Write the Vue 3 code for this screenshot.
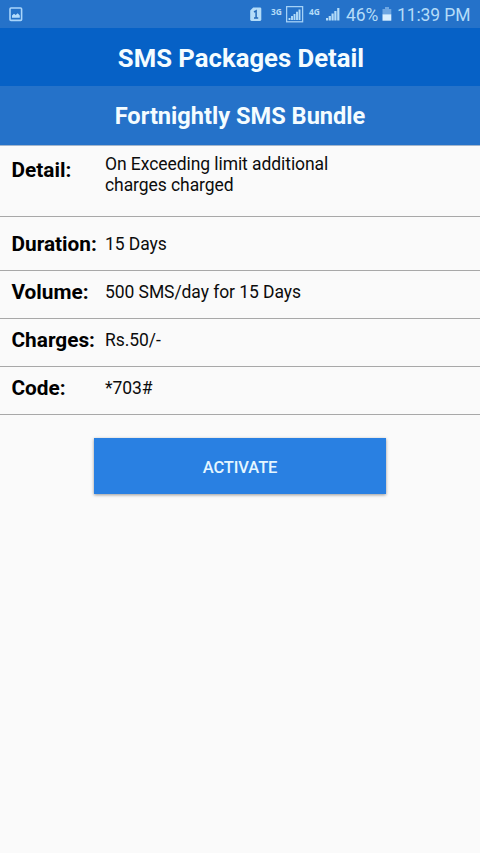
<script setup>
const rows = [
  { label: 'Detail:', value: 'On Exceeding limit additional charges charged', kind: 'tall' },
  { label: 'Duration:', value: '15 Days', kind: 'medium' },
  { label: 'Volume:', value: '500 SMS/day for 15 Days', kind: 'short' },
  { label: 'Charges:', value: 'Rs.50/-', kind: 'short' },
  { label: 'Code:', value: '*703#', kind: 'short' },
]
</script>

<template>
  <div class="screen">
    <div class="status">
      <svg class="photo" width="14" height="15" viewBox="0 0 14 15">
        <rect x="1" y="1" width="11.6" height="12.4" rx="1" fill="none" stroke="#a9d5fb" stroke-width="1.6" />
        <path d="M3 10.8V8.6L5 6.7L6.7 8L8.7 6.2L10.8 8.6V10.8Z" fill="#b4dcfc" />
      </svg>
      <svg class="sim" width="12" height="15" viewBox="0 0 12 15">
        <path d="M3.2 0.5H10Q11.3 0.5 11.3 1.8V12.6Q11.3 14 10 14H1.5Q0.2 14 0.2 12.6V3.5Z" fill="#b4dcf8" />
        <path d="M4 5L6.1 3.8V11.2M4 11.1H8.2" fill="none" stroke="#2369b9" stroke-width="1.5" />
      </svg>
      <span class="net net-a">3G</span>
      <svg class="boxed" width="18" height="17" viewBox="0 0 18 17">
        <rect x="0.6" y="0.6" width="16" height="15.2" fill="none" stroke="#a4d1f7" stroke-width="1.3" />
        <path d="M3.5 12V14M6 10V14M8.5 8V14M11 5.8V14M13.5 3.5V14" stroke="#b4dcf8" stroke-width="1.9" />
      </svg>
      <span class="net net-b">4G</span>
      <svg class="signal" width="14" height="14" viewBox="0 0 14 14">
        <path d="M1 11V13.5M3.8 9V13.5M6.6 6.5V13.5M9.4 4V13.5M12.3 1V13.5" stroke="#b4dcf8" stroke-width="2.2" />
      </svg>
      <span class="percent">46%</span>
      <svg class="battery" width="10" height="15" viewBox="0 0 10 15">
        <path d="M3 0H7V2H9.3V7.5H0.5V2H3Z" fill="#6da6e2" />
        <rect x="0.5" y="7.3" width="8.8" height="6.4" fill="#d9efff" />
      </svg>
      <span class="time">11:39 PM</span>
    </div>
    <header class="title">SMS Packages Detail</header>
    <h2 class="subtitle">Fortnightly SMS Bundle</h2>
    <dl class="rows">
      <div v-for="row in rows" :key="row.label" class="row" :class="row.kind">
        <dt>{{ row.label }}</dt>
        <dd>{{ row.value }}</dd>
      </div>
    </dl>
    <button class="activate">ACTIVATE</button>
  </div>
</template>

<style>
body {
  background: #fafafa;
}
</style>

<style scoped>
.screen {
  width: 480px;
  height: 853px;
  overflow: hidden;
  background: #fafafa;
  font-family: Roboto, sans-serif;
  color: #0c0c0c;
}
.status {
  box-sizing: border-box;
  height: 28px;
  padding: 7px 0 0 9px;
  background: #2572c9;
  color: #b4dcf8;
  display: flex;
  align-items: flex-start;
  white-space: nowrap;
}
.status svg,
.status span {
  flex: none;
}
.sim {
  margin-left: 227px;
}
.net {
  font: bold 8.4px/9px "Open Sans", sans-serif;
  width: 14px;
}
.net-a {
  margin-left: 9px;
}
.boxed {
  margin-left: 1px;
  margin-top: -1px;
}
.net-b {
  margin-left: 5px;
}
.signal {
  margin-left: 3px;
}
.percent {
  width: 35px;
  margin-left: 6px;
  font-size: 17.5px;
  line-height: 17px;
  letter-spacing: -0.1px;
}
.battery {
  margin-left: 1px;
}
.time {
  margin-left: 5px;
  font-size: 17.5px;
  line-height: 17px;
  letter-spacing: -0.1px;
}
.title,
.subtitle {
  margin: 0;
  text-align: center;
  color: #f4fcff;
  font-weight: 700;
}
.title {
  height: 58px;
  background: #0661c6;
  font-size: 25.7px;
  line-height: 60px;
  padding-left: 2px;
}
.subtitle {
  height: 60px;
  background: #2572c9;
  font-size: 23.6px;
  line-height: 60px;
  box-sizing: border-box;
  border-bottom: 1px solid #a3b6cc;
}
.rows {
  margin: 0;
}
.row {
  box-sizing: border-box;
  display: flex;
  padding: 9px 0 0 11.5px;
  border-bottom: 1px solid #a8a8a8;
}
.short {
  height: 48px;
}
.medium {
  height: 54px;
  padding-top: 15px;
}
.tall {
  height: 71px;
  padding-top: 12px;
}
.tall dd {
  margin-top: -4px;
}
dt {
  width: 93.5px;
  flex: none;
  font-size: 20.8px;
  line-height: 24px;
  font-weight: 700;
  color: #000;
}
dd {
  margin: 2px 0 0;
  width: 240px;
  font-size: 17.5px;
  line-height: 20.5px;
  letter-spacing: -0.07px;
}
.activate {
  display: block;
  width: 292px;
  height: 56px;
  margin: 23px auto 0;
  padding: 3px 0 0;
  border: 0;
  background: #2980e2;
  color: #e4f6ff;
  font: 500 16.5px/20px Roboto, sans-serif;
  letter-spacing: -0.1px;
  box-shadow: 0 1px 3px rgba(0, 0, 0, 0.4);
}
</style>
